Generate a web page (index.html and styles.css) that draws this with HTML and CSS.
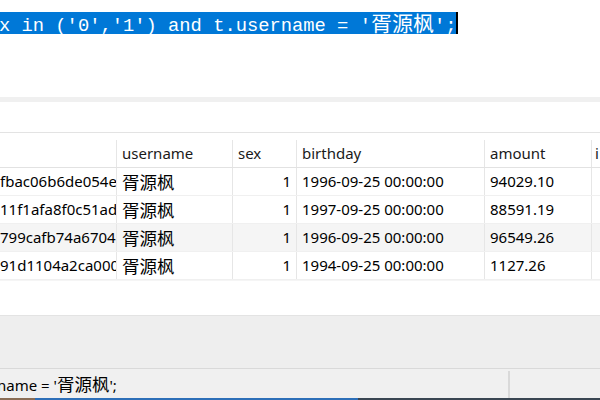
FILE: index.html
```html
<!DOCTYPE html>
<html>
<head>
<meta charset="utf-8">
<link rel="stylesheet" href="styles.css">
</head>
<body>
<div class="app">
  <div class="editor">
    <div class="line"><span class="sel">x in ('0','1') and t.username = '<span class="cjk">胥源枫</span>';</span><span class="caret"></span></div>
  </div>
  <div class="splitter"></div>
  <div class="toolbar"></div>
  <div class="grid">
    <div class="row head">
      <div class="c c0"></div>
      <div class="c c1">username</div>
      <div class="c c2">sex</div>
      <div class="c c3">birthday</div>
      <div class="c c4">amount</div>
      <div class="c c5">i</div>
    </div>
    <div class="row">
      <div class="c c0"><span class="id">fbac06b6de054ef2</span></div>
      <div class="c c1"><span class="cjk">胥源枫</span></div>
      <div class="c c2 num">1</div>
      <div class="c c3">1996-09-25 00:00:00</div>
      <div class="c c4">94029.10</div>
      <div class="c c5"></div>
    </div>
    <div class="row">
      <div class="c c0"><span class="id">11f1afa8f0c51ad4</span></div>
      <div class="c c1"><span class="cjk">胥源枫</span></div>
      <div class="c c2 num">1</div>
      <div class="c c3">1997-09-25 00:00:00</div>
      <div class="c c4">88591.19</div>
      <div class="c c5"></div>
    </div>
    <div class="row alt">
      <div class="c c0"><span class="id">799cafb74a67045</span></div>
      <div class="c c1"><span class="cjk">胥源枫</span></div>
      <div class="c c2 num">1</div>
      <div class="c c3">1996-09-25 00:00:00</div>
      <div class="c c4">96549.26</div>
      <div class="c c5"></div>
    </div>
    <div class="row">
      <div class="c c0"><span class="id">91d1104a2ca0004</span></div>
      <div class="c c1"><span class="cjk">胥源枫</span></div>
      <div class="c c2 num">1</div>
      <div class="c c3">1994-09-25 00:00:00</div>
      <div class="c c4">1127.26</div>
      <div class="c c5"></div>
    </div>
  </div>
  <div class="blank"></div>
  <div class="panel"></div>
  <div class="status">
    <div class="sql">name = '<span class="cjk">胥源枫</span>';</div>
    <div class="right"></div>
  </div>
  <div class="taskbar">
    <div class="tb-a"></div>
    <div class="tb-b"></div>
    <div class="tb-c"></div>
  </div>
</div>
</body>
</html>
```
FILE: styles.css
```css
html, body {
  margin: 0;
  padding: 0;
  background: #ffffff;
}
.app {
  width: 600px;
  height: 400px;
  overflow: hidden;
  display: flex;
  flex-direction: column;
}
.editor {
  height: 97px;
  padding-top: 12px;
  box-sizing: border-box;
  background: #ffffff;
  overflow: hidden;
}
.line {
  display: flex;
  align-items: stretch;
  height: 22px;
  margin-left: -6px;
  white-space: pre;
  font-family: "Liberation Mono", monospace;
  font-size: 18.8px;
  line-height: 22px;
}
.sel {
  background: #0078d7;
  color: #ffffff;
  padding-left: 5px;
  height: 22px;
}
.sel .cjk {
  font-family: "Noto Sans CJK SC", sans-serif;
  font-size: 21px;
  line-height: 20px;
}
.caret {
  width: 2px;
  height: 22px;
  background: #000000;
}
.splitter {
  height: 5px;
  background: #f0f0f0;
}
.toolbar {
  height: 30px;
  background: #ffffff;
}
.grid {
  border-top: 1px solid #e3e3e3;
  padding-top: 7px;
  background: #ffffff;
  font-family: "Noto Sans", "Noto Sans CJK SC", sans-serif;
  font-size: 15px;
  color: #000000;
}
.row {
  display: grid;
  grid-template-columns: 117px 116px 64px 188px 107px 1fr;
  height: 28px;
  box-sizing: border-box;
  border-bottom: 1px solid #f0f0f0;
}
.row.head {
  height: 28px;
  border-bottom: 1px solid #e2e2e2;
  color: #1a1a1a;
}
.row.alt {
  background: #f5f5f5;
}
.c {
  border-right: 1px solid #e6e6e6;
  padding: 0 5px;
  display: flex;
  align-items: center;
  white-space: nowrap;
  overflow: hidden;
  line-height: 27px;
}
.c0 {
  padding: 0;
}
.c5 {
  border-right: none;
  padding-left: 3px;
}
.num {
  justify-content: flex-end;
  padding-right: 5px;
}
.id {
  margin-left: 0;
}
.cjk {
  font-family: "Noto Sans CJK SC", sans-serif;
  font-size: 17.5px;
}
.blank {
  height: 34px;
  border-top: 1px solid #f5f5f5;
  background: #ffffff;
}
.panel {
  height: 52px;
  background: #eeeeee;
  border-top: 1px solid #e3e3e3;
  border-bottom: 1px solid #d9d9d9;
}
.status {
  height: 29px;
  background: #f0f0f0;
  display: flex;
  font-family: "Noto Sans", "Noto Sans CJK SC", sans-serif;
  font-size: 15px;
  color: #000000;
}
.sql {
  width: 511px;
  border-right: 2px solid #d9d9d9;
  margin: 2px 0 0 -3px;
  white-space: pre;
  line-height: 25px;
}
.status .cjk {
  font-size: 17.5px;
}
.right {
  flex: 1;
}
.taskbar {
  height: 2px;
  display: flex;
}
.tb-a {
  width: 35px;
  background: #8a6d55;
}
.tb-b {
  width: 323px;
  background: #2d6fb8;
}
.tb-c {
  flex: 1;
  background: #3a4652;
}
```
